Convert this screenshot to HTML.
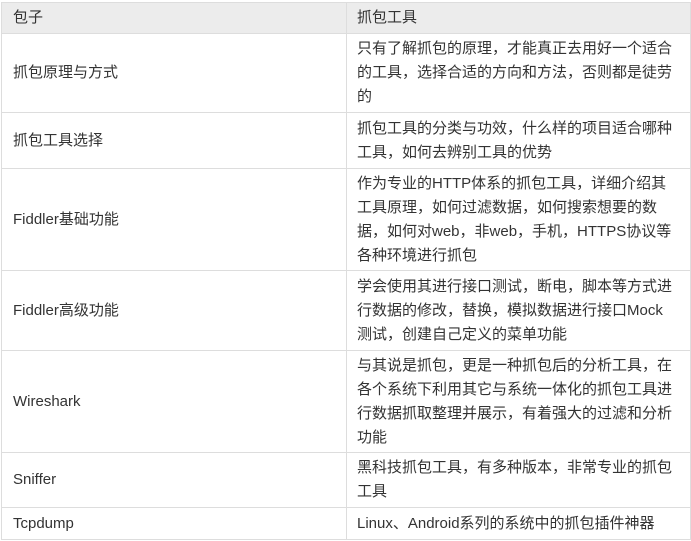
<!DOCTYPE html>
<html><head><meta charset="utf-8"><style>
body{margin:0;background:#fff;width:691px;height:541px;overflow:hidden;font-family:"Liberation Sans","Noto Sans CJK SC",sans-serif;font-size:15px;color:#333}
.t{position:absolute;left:1px;top:2px;width:689px;border-top:1px solid #ddd;border-left:1px solid #ddd}
.r{display:flex;border-bottom:1px solid #ddd;box-sizing:border-box}
.c{display:flex;align-items:center;border-right:1px solid #ddd;box-sizing:border-box;line-height:24px;white-space:nowrap;overflow:hidden}
.a{width:345px;padding-left:11px}
.b{width:344px;padding-left:10px}
.h{background:#ececec}
</style></head><body>
<div class="t">
<div class="r h" style="height:31px"><div class="c a">包子</div><div class="c b">抓包工具</div></div>
<div class="r" style="height:79px"><div class="c a">抓包原理与方式</div><div class="c b">只有了解抓包的原理，才能真正去用好一个适合<br>的工具，选择合适的方向和方法，否则都是徒劳<br>的</div></div>
<div class="r" style="height:56px"><div class="c a">抓包工具选择</div><div class="c b">抓包工具的分类与功效，什么样的项目适合哪种<br>工具，如何去辨别工具的优势</div></div>
<div class="r" style="height:102px"><div class="c a">Fiddler基础功能</div><div class="c b">作为专业的HTTP体系的抓包工具，详细介绍其<br>工具原理，如何过滤数据，如何搜索想要的数<br>据，如何对web，非web，手机，HTTPS协议等<br>各种环境进行抓包</div></div>
<div class="r" style="height:80px"><div class="c a">Fiddler高级功能</div><div class="c b">学会使用其进行接口测试，断电，脚本等方式进<br>行数据的修改，替换，模拟数据进行接口Mock<br>测试，创建自己定义的菜单功能</div></div>
<div class="r" style="height:102px"><div class="c a">Wireshark</div><div class="c b">与其说是抓包，更是一种抓包后的分析工具，在<br>各个系统下利用其它与系统一体化的抓包工具进<br>行数据抓取整理并展示，有着强大的过滤和分析<br>功能</div></div>
<div class="r" style="height:55px"><div class="c a">Sniffer</div><div class="c b">黑科技抓包工具，有多种版本，非常专业的抓包<br>工具</div></div>
<div class="r" style="height:32px"><div class="c a">Tcpdump</div><div class="c b">Linux、Android系列的系统中的抓包插件神器</div></div>
</div>
</body></html>
